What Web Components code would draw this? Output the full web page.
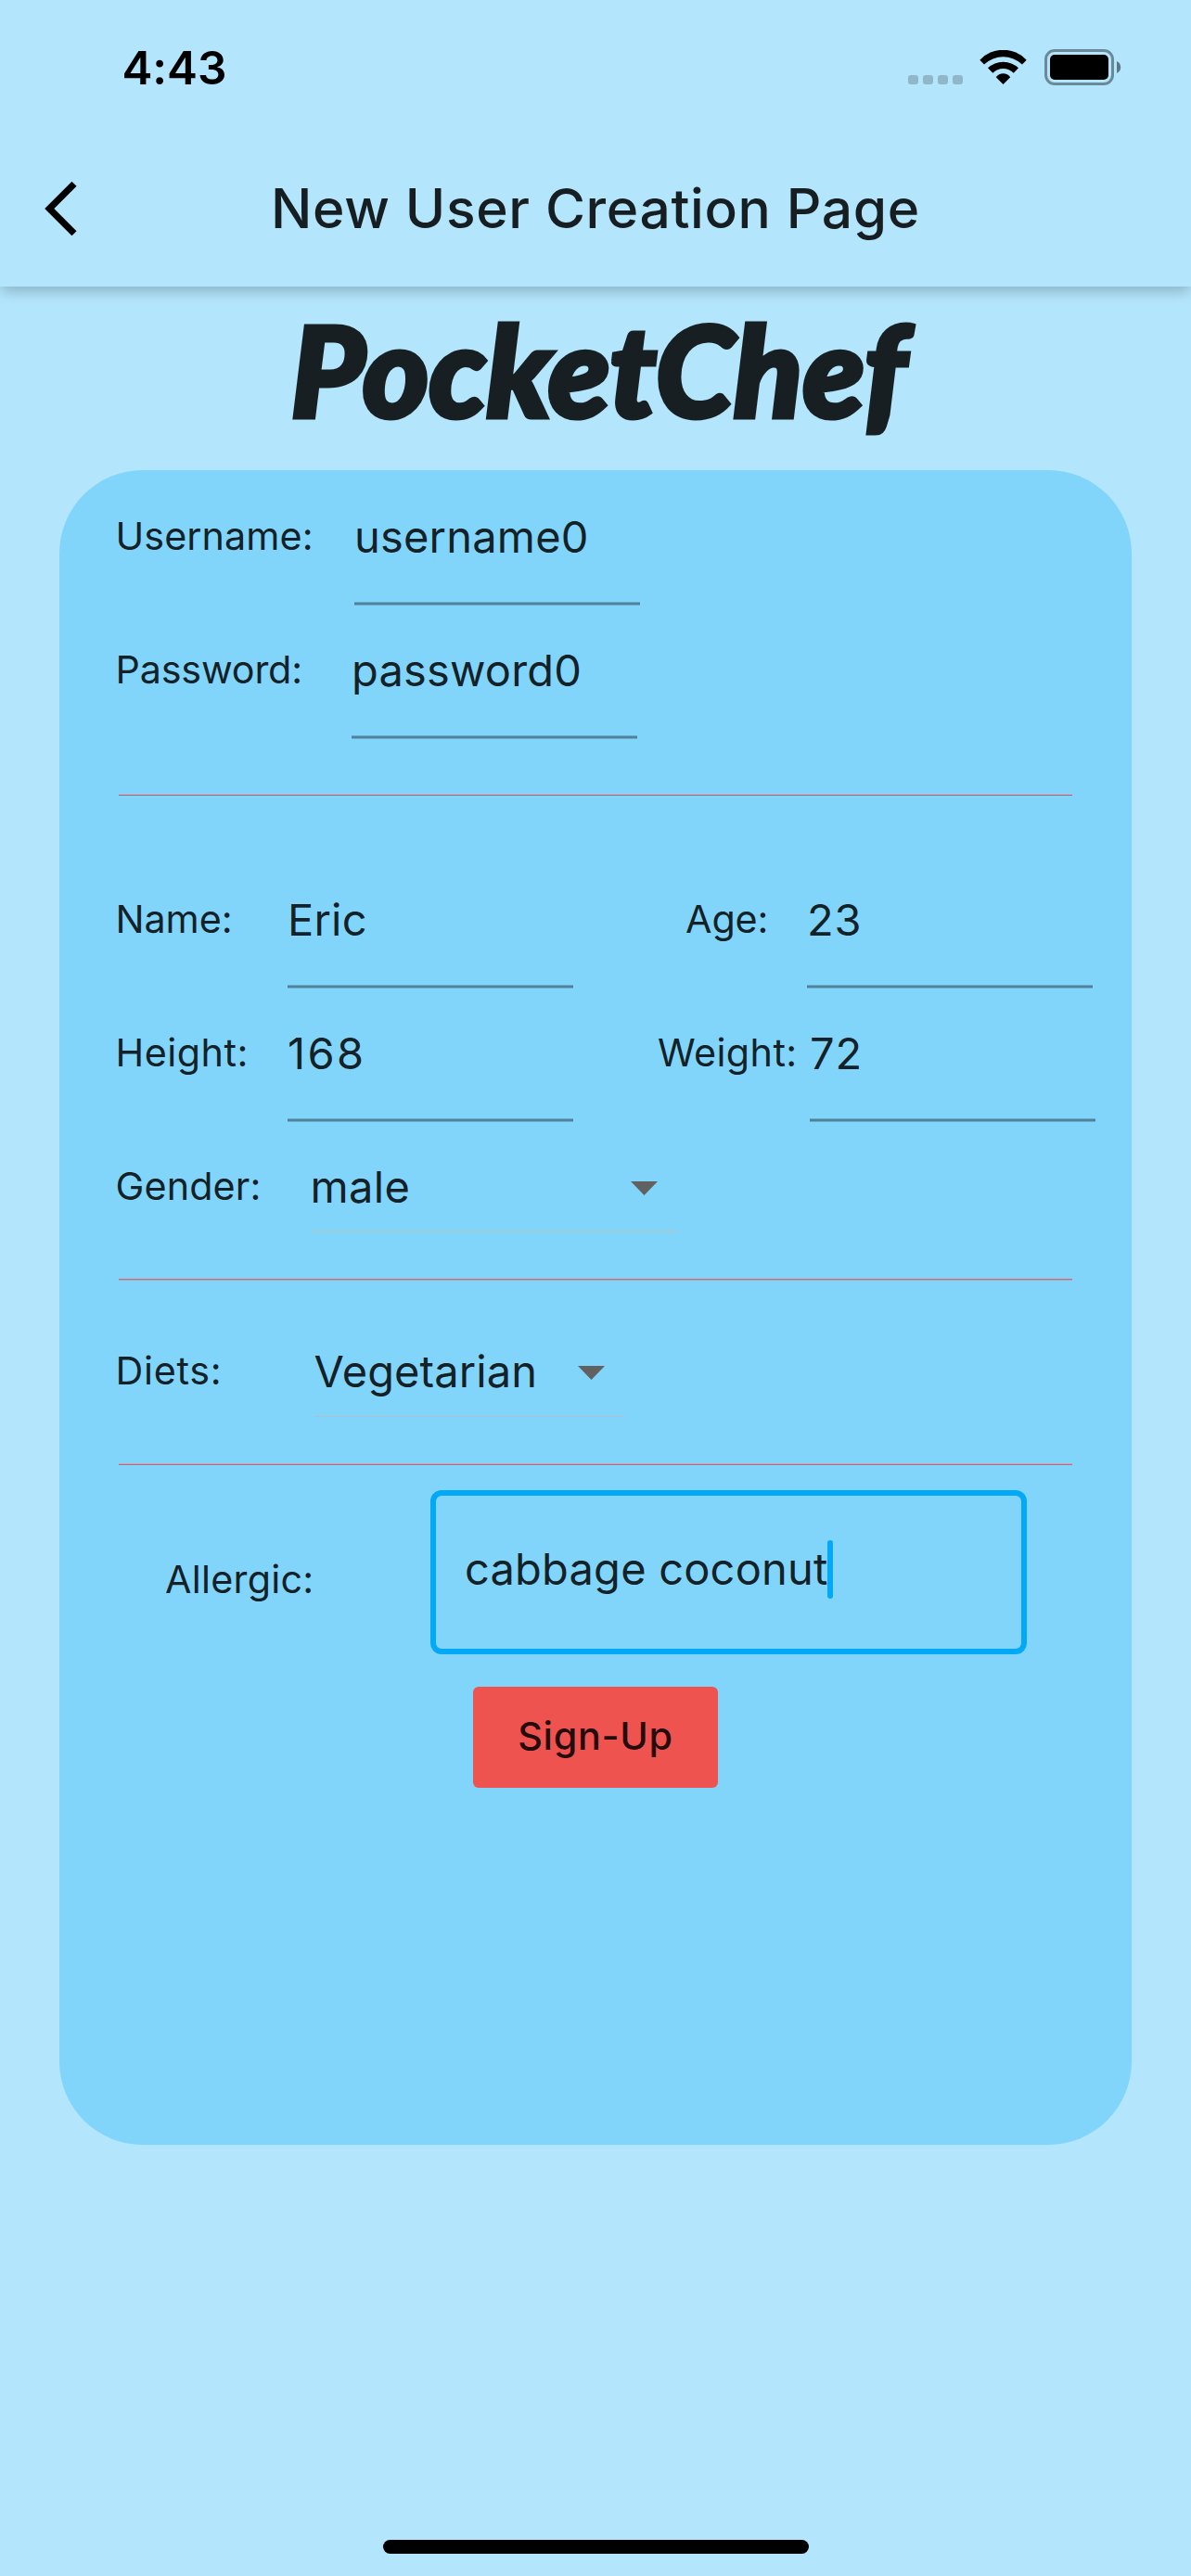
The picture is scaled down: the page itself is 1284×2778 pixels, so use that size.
<!DOCTYPE html>
<html lang="en">
<head>
<meta charset="utf-8">
<title>New User Creation Page</title>
<style>
html,body{margin:0;padding:0}
body{width:1284px;height:2778px;overflow:hidden;background:#b3e5fc;color:rgba(0,0,0,.87);font-family:Inter,"Liberation Sans",sans-serif}
</style>
</head>
<body>
<sign-up-page></sign-up-page>
<script>
const define = (name, css, html) => customElements.define(name, class extends HTMLElement {
  connectedCallback() {
    if (this.shadowRoot) return;
    this.attachShadow({mode: 'open'}).innerHTML = `<style>*{box-sizing:border-box}${css}</style>${html}`;
  }
});

define('status-bar', `
:host{display:flex;height:141px;padding-left:131.5px;color:#000}
.time{font-size:49.5px;font-weight:600;line-height:60px;letter-spacing:-.1px;margin-top:43px;width:847.5px}
.dots{display:flex;gap:5.5px;margin-top:81px;width:77px}
.dots i{width:10.5px;height:10px;border-radius:3px;background:rgba(0,0,0,.2)}
.wifi{margin-top:54px;width:70px;height:37px}
.battery{margin-top:53px}
svg{display:block;flex:none}
`, `<div class="time">4:43</div>
<div class="dots"><i></i><i></i><i></i><i></i></div>
<svg class="wifi" width="70" height="37" viewBox="0 0 70 37"><path d="M.3 10.7A34.5 34.5 0 0 1 50.7 10.7L46 15.4A30 30 0 0 0 5 15.4ZM9 19.3A23.9 23.9 0 0 1 42 19.3L36.7 24.8A15.2 15.2 0 0 0 14.3 24.8ZM17.8 29.3A9.3 9.3 0 0 1 33.2 29.3L25.5 37Z"/></svg>
<svg class="battery" width="83" height="39" viewBox="0 0 83 39"><rect x="1.5" y="1.5" width="72" height="36" rx="9.5" fill="none" stroke="#000" stroke-opacity=".4" stroke-width="3"/><rect x="6" y="6" width="63" height="27" rx="5"/><path d="M78 13a7.2 7.2 0 0 1 0 13Z" fill-opacity=".48"/></svg>`);

define('app-bar', `
:host{display:grid;grid-template-columns:130px 1fr 130px;align-items:center;height:168px}
svg{display:block;margin-left:48px}
h1{margin:0;text-align:center;font-size:58.7px;font-weight:500;line-height:70px;letter-spacing:.64px;white-space:nowrap}
`, `<svg width="35" height="60" viewBox="0 0 35 60"><path d="M32 3.3L5.3 30L32 56.700" fill="none" stroke="#000" stroke-width="7.200"/></svg><h1><slot></slot></h1>`);

define('brand-title', `
:host{display:block;height:198px;padding:9px 0 0 313.5px}
span{display:inline-block;color:#181f22;font:italic 900 136px/160px Lato,"Open Sans",sans-serif;letter-spacing:.2px;-webkit-text-stroke:5px #181f22;white-space:nowrap}
`, `<span><slot></slot></span>`);

define('form-row', `
:host{display:flex;align-items:flex-start;height:144px;padding-left:60.5px}
:host([short]){height:130px}
`, `<slot></slot>`);

define('field-label', `
:host{display:block;flex:none;width:var(--w);margin-left:var(--gap,0);font-size:41.3px;line-height:60px;letter-spacing:var(--ls,0);white-space:nowrap}
`, `<slot></slot>`);

define('text-field', `
:host{display:block;flex:none;width:308px;height:105px;padding-top:1px;font-size:47px;line-height:60px;letter-spacing:var(--ls,.2px);
background:linear-gradient(rgba(0,0,0,.2) 1px,rgba(0,0,0,.39) 1px,rgba(0,0,0,.39) 3px,rgba(0,0,0,.2) 3px) 0 101px/100% 4px no-repeat}
`, `<slot></slot>`);

define('select-field', `
:host{display:flex;justify-content:space-between;align-items:flex-start;flex:none;width:var(--w);height:81px;padding:1px var(--pr,21.5px) 0 0;font-size:47px;line-height:60px;letter-spacing:var(--ls,.2px);
background:linear-gradient(var(--line),var(--line)) 0 var(--y)/100% var(--h) no-repeat}
svg{display:block;margin-top:24px}
`, `<span><slot></slot></span><svg width="29" height="15" viewBox="0 0 29 15"><path d="M0 0H29L14.500 15Z" fill="#616161"/></svg>`);

define('form-divider', `
:host{display:block;flex:none;height:var(--h,2px);margin:var(--t,0) 64px var(--b,0);background:var(--c)}
`, ``);

define('outlined-field', `
:host{display:flex;align-items:flex-start;flex:none;width:642.5px;height:177px;border:6px solid #03a9f4;border-radius:12px;padding:48px 0 0 31px;font-size:47px;letter-spacing:.2px;white-space:nowrap}
span{line-height:60px;margin-top:1px}
i{width:6px;height:63px;border-radius:3px;background:#03a9f4;margin-left:-1px}
`, `<span><slot></slot></span><i></i>`);

define('raised-button', `
:host{display:flex;flex:none;align-items:center;justify-content:center;width:264px;height:109px;padding-bottom:3px;border-radius:6px;background:#ef5350;font-size:41.3px;font-weight:500;letter-spacing:.7px;line-height:60px}
`, `<slot></slot>`);

define('form-card', `
:host{display:flex;flex-direction:column;width:1156px;height:1806px;margin-left:64px;padding-top:41px;border-radius:90px;background:#81d4fa}
`, `<slot></slot>`);

define('home-indicator', `
:host{display:block;width:459px;height:15px;border-radius:7.5px;background:#000;margin:426px 0 0 413px}
`, ``);

define('sign-up-page', `
:host{display:block;width:1284px;height:2778px}
header{position:relative;height:309px;background:#b3e5fc;box-shadow:0 8px 14px -2px rgba(0,0,0,.16),0 3px 12px rgba(0,0,0,.07)}
.allergic{display:flex;align-items:flex-start;padding-left:114px;margin-bottom:35px}
.allergic field-label{margin-top:66px}
raised-button{align-self:center}
`, `<header><status-bar></status-bar><app-bar>New User Creation Page</app-bar></header>
<brand-title>PocketChef</brand-title>
<form-card>
<form-row><field-label style="--w:257.5px;--ls:.07px">Username:</field-label><text-field>username0</text-field></form-row>
<form-row><field-label style="--w:254.5px;--ls:-.18px">Password:</field-label><text-field>password0</text-field></form-row>
<form-divider style="--t:21px;--b:103px;--h:1px;--c:#de4a52"></form-divider>
<form-row><field-label style="--w:185.5px;--ls:-.1px">Name:</field-label><text-field>Eric</text-field><field-label style="--gap:121px;--w:131px;--ls:-.1px">Age:</field-label><text-field style="--ls:.8px">23</text-field></form-row>
<form-row><field-label style="--w:185.5px;--ls:.5px">Height:</field-label><text-field style="--ls:2.4px">168</text-field><field-label style="--gap:91px;--w:164px;--ls:.4px">Weight:</field-label><text-field style="--ls:.9px">72</text-field></form-row>
<form-row short><field-label style="--w:210px;--ls:.13px">Gender:</field-label><select-field style="--w:396px;--line:#a3c8d8;--y:78px;--h:2px;--ls:.35px">male</select-field></form-row>
<form-divider style="--b:67px;--c:linear-gradient(#cf6a74 1px,#b0a0b3 1px)"></form-divider>
<form-row short><field-label style="--w:214px;--ls:.68px">Diets:</field-label><select-field style="--w:335.5px;--pr:22.5px;--line:#b0c0c8;--y:79px;--h:1px;--ls:.1px">Vegetarian</select-field></form-row>
<form-divider style="--b:27px;--c:linear-gradient(#9fb4cd 1px,#dc5f68 1px)"></form-divider>
<div class="allergic"><field-label style="--w:286px;--ls:.25px">Allergic:</field-label><outlined-field>cabbage coconut</outlined-field></div>
<raised-button>Sign-Up</raised-button>
</form-card>
<home-indicator></home-indicator>`);
</script>
</body>
</html>
